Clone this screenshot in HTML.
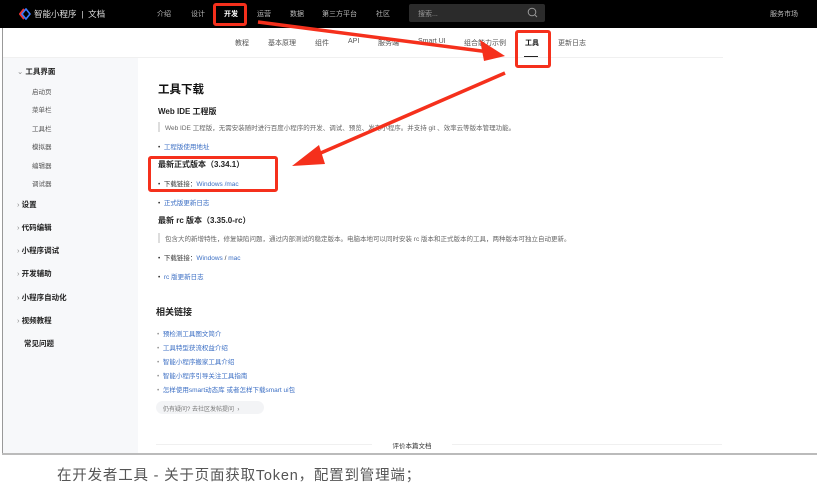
<!DOCTYPE html>
<html><head><meta charset="utf-8"><style>
*{margin:0;padding:0;box-sizing:border-box}
body{width:817px;height:484px;overflow:hidden;background:#fff;font-family:"Liberation Sans","Noto Sans CJK SC",sans-serif;position:relative;color:#333}
.a{position:absolute;white-space:nowrap}
.nav{left:0;top:0;width:817px;height:28px;background:#000}
.nv{font-size:7px;color:#bbb;top:9px}
.sb{font-size:7px;color:#555;top:38px}
.side{left:3px;top:58px;width:135px;height:395px;background:#f7f8fa}
.s1{font-size:7.5px;font-weight:bold;color:#222}
.s2{font-size:6.5px;color:#555}
.t{font-size:6.5px;color:#666}
.lk{color:#3c6fc4}
.b{font-size:8px;font-weight:bold;color:#222}
.dot{font-size:6.5px;color:#333}
.bar{border-left:2px solid #ddd;padding-left:5px}
.rl{font-size:6.5px;color:#3c6fc4}
.rb{border:3px solid #f5301c;border-radius:3px;position:absolute}
</style></head><body>
<div class="a nav"></div>
<svg class="a" style="left:19px;top:8px" width="12" height="12" viewBox="0 0 12 12"><path d="M5 1 L1 6 L5 11" stroke="#e33" stroke-width="2" fill="none"/><path d="M7 1 L11 6 L7 11 L3 6Z" stroke="#3a7bff" stroke-width="1.6" fill="none"/></svg>
<div class="a" style="left:34px;top:8px;font-size:8.5px;color:#ddd">智能小程序 &nbsp;|&nbsp; 文档</div>
<div class="a nv" style="left:157px">介绍</div>
<div class="a nv" style="left:191px">设计</div>
<div class="a nv" style="left:224px;color:#fff;font-weight:bold">开发</div>
<div class="a nv" style="left:257px">运营</div>
<div class="a nv" style="left:290px">数据</div>
<div class="a nv" style="left:322px">第三方平台</div>
<div class="a nv" style="left:376px">社区</div>
<div class="a" style="left:409px;top:4px;width:136px;height:18px;background:#2b2b2b;border-radius:2px"></div>
<div class="a" style="left:418px;top:9px;font-size:7px;color:#999">搜索...</div>
<svg class="a" style="left:527px;top:7px" width="11" height="11" viewBox="0 0 11 11"><circle cx="5" cy="5" r="3.8" stroke="#999" fill="none"/><path d="M8 8 L10 10" stroke="#999"/></svg>
<div class="a nv" style="left:770px">服务市场</div>
<div class="rb" style="left:213px;top:3px;width:34px;height:23px"></div>

<div class="a sb" style="left:235px">教程</div>
<div class="a sb" style="left:268px">基本原理</div>
<div class="a sb" style="left:315px">组件</div>
<div class="a sb" style="left:348px">API</div>
<div class="a sb" style="left:378px">服务端</div>
<div class="a sb" style="left:418px">Smart UI</div>
<div class="a sb" style="left:464px">组合能力示例</div>
<div class="a sb" style="left:525px;color:#111;font-weight:bold">工具</div>
<div class="a" style="left:524px;top:56px;width:14px;height:1.5px;background:#222"></div>
<div class="a sb" style="left:558px">更新日志</div>
<div class="a" style="left:3px;top:57px;width:720px;height:1px;background:#f0f0f0"></div>
<div class="rb" style="left:515px;top:30px;width:36px;height:38px"></div>

<div class="a" style="left:2px;top:28px;width:1px;height:426px;background:#999"></div>
<div class="a side"></div>
<div class="a" style="left:2px;top:453px;width:815px;height:1.5px;background:#bbb"></div>

<div class="a s1" style="left:17px;top:66px"><span style="color:#888;font-weight:normal">⌄</span> 工具界面</div>
<div class="a s2" style="left:32px;top:86px">启动页</div>
<div class="a s2" style="left:32px;top:104px">菜单栏</div>
<div class="a s2" style="left:32px;top:123px">工具栏</div>
<div class="a s2" style="left:32px;top:141px">模拟器</div>
<div class="a s2" style="left:32px;top:160px">编辑器</div>
<div class="a s2" style="left:32px;top:178px">调试器</div>
<div class="a s1" style="left:17px;top:199px"><span style="color:#888;font-weight:normal">›</span> 设置</div>
<div class="a s1" style="left:17px;top:222px"><span style="color:#888;font-weight:normal">›</span> 代码编辑</div>
<div class="a s1" style="left:17px;top:245px"><span style="color:#888;font-weight:normal">›</span> 小程序调试</div>
<div class="a s1" style="left:17px;top:268px"><span style="color:#888;font-weight:normal">›</span> 开发辅助</div>
<div class="a s1" style="left:17px;top:292px"><span style="color:#888;font-weight:normal">›</span> 小程序自动化</div>
<div class="a s1" style="left:17px;top:315px"><span style="color:#888;font-weight:normal">›</span> 视频教程</div>
<div class="a s1" style="left:24px;top:338px">常见问题</div>

<div class="a" style="left:158px;top:81px;font-size:11.5px;font-weight:bold;color:#111">工具下载</div>
<div class="a b" style="left:158px;top:106px">Web IDE 工程版</div>
<div class="a t bar" style="left:158px;top:122px">Web IDE 工程版，无需安装随时进行百度小程序的开发、调试、预览、发布小程序。并支持 git 、效率云等版本管理功能。</div>
<div class="a dot" style="left:158px;top:141px">•&nbsp; <span class="lk">工程版使用地址</span></div>
<div class="a b" style="left:158px;top:159px">最新正式版本（3.34.1）</div>
<div class="a dot" style="left:158px;top:178px">•&nbsp; 下载链接：<span class="lk">Windows /mac</span></div>
<div class="a dot" style="left:158px;top:197px">•&nbsp; <span class="lk">正式版更新日志</span></div>
<div class="a b" style="left:158px;top:215px">最新 rc 版本（3.35.0-rc）</div>
<div class="a t bar" style="left:158px;top:233px">包含大的新增特性，修复缺陷问题，通过内部测试的稳定版本。电脑本地可以同时安装 rc 版本和正式版本的工具，两种版本可独立自动更新。</div>
<div class="a dot" style="left:158px;top:252px">•&nbsp; 下载链接：<span class="lk">Windows</span> / <span class="lk">mac</span></div>
<div class="a dot" style="left:158px;top:271px">•&nbsp; <span class="lk">rc 版更新日志</span></div>
<div class="rb" style="left:148px;top:156px;width:130px;height:36px"></div>

<div class="a b" style="left:156px;top:305px;font-size:9px">相关链接</div>
<div class="a rl" style="left:157px;top:328px"><span style="color:#999">•</span>&nbsp; 预检测工具图文简介</div>
<div class="a rl" style="left:157px;top:342px"><span style="color:#999">•</span>&nbsp; 工具特型获流权益介绍</div>
<div class="a rl" style="left:157px;top:356px"><span style="color:#999">•</span>&nbsp; 智能小程序搬家工具介绍</div>
<div class="a rl" style="left:157px;top:370px"><span style="color:#999">•</span>&nbsp; 智能小程序引导关注工具指南</div>
<div class="a rl" style="left:157px;top:384px"><span style="color:#999">•</span>&nbsp; 怎样使用smart动态库 或者怎样下载smart ui包</div>
<div class="a" style="left:156px;top:401px;width:108px;height:13px;background:#f3f4f6;border-radius:7px;font-size:6px;color:#777;padding:3px 0 0 7px">仍有疑问? 去社区发帖提问 &nbsp;›</div>
<div class="a" style="left:156px;top:444px;width:566px;height:1px;background:#f0f0f0"></div>
<div class="a" style="left:372px;top:438px;width:80px;height:12px;background:#fff;font-size:6.5px;color:#333;text-align:center;padding-top:2px">评价本篇文档</div>

<svg class="a" style="left:0;top:0" width="817" height="484">
<path d="M258 22 L497 53" stroke="#f5301c" stroke-width="3.5"/>
<path d="M505 56 L480 40 L484 61Z" fill="#f5301c"/>
<path d="M505 73 L300 162" stroke="#f5301c" stroke-width="3.5"/>
<path d="M292 166 L319 145 L325 164Z" fill="#f5301c"/>
</svg>

<div class="a" style="left:57px;top:464px;font-size:14.5px;color:#555;letter-spacing:0.8px">在开发者工具 - 关于页面获取Token，配置到管理端；</div>
</body></html>
